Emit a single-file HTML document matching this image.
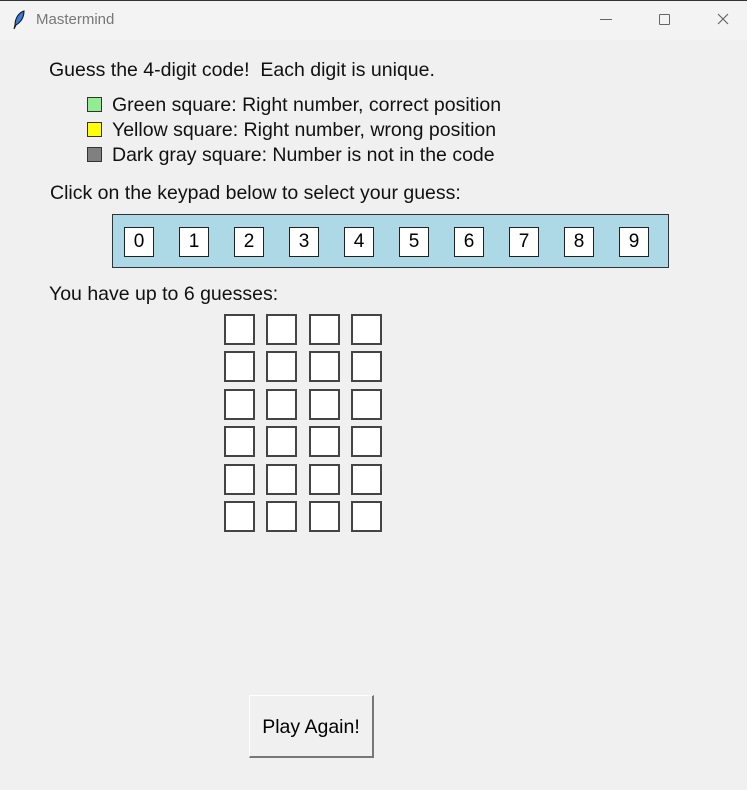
<!DOCTYPE html>
<html><head><style>
body{margin:0;width:747px;height:790px;background:#f0f0f0;font-family:"Liberation Sans",Arial,sans-serif;overflow:hidden;position:relative;color:#000}
.a{position:absolute}
.t{font-size:19.5px;white-space:nowrap;line-height:20px;color:#111}
.sq{position:absolute;width:13px;height:13px;border:1px solid #333}
.k{position:absolute;top:227px;width:28px;height:28px;border:1px solid #222;background:#fff;font-size:19px;text-align:center;line-height:28px}
.g{position:absolute;width:27px;height:27px;border:2px solid #444;background:#fff}
</style></head><body>
<div class="a" style="left:0;top:0;width:747px;height:1px;background:#333"></div>
<div class="a" style="left:0;top:1px;width:747px;height:39px;background:#f3f3f3"></div>
<svg class="a" style="left:12px;top:10px" width="14" height="20" viewBox="0 0 14 20"><path d="M12 1 C6 3 3 9 3 15 L2 19 L4 15 C9 12 12 7 12 1Z" fill="#3a7ad8" stroke="#111" stroke-width="1"/></svg>
<div class="a" style="left:36px;top:11px;font-size:15px;color:#777">Mastermind</div>
<div class="a" style="left:600px;top:19px;width:12px;height:1px;background:#666"></div>
<div class="a" style="left:659px;top:14px;width:9px;height:9px;border:1px solid #666;border-radius:1px"></div>
<svg class="a" style="left:717px;top:13px" width="12" height="12"><path d="M1 1L11 11M11 1L1 11" stroke="#666" stroke-width="1.2"/></svg>

<div class="a t" style="left:49px;top:60px">Guess the 4-digit code!&nbsp; Each digit is unique.</div>
<div class="sq" style="left:87px;top:97px;background:#90ee90"></div>
<div class="a t" style="left:112px;top:95px">Green square: Right number, correct position</div>
<div class="sq" style="left:87px;top:122px;background:#ffff00"></div>
<div class="a t" style="left:112px;top:120px">Yellow square: Right number, wrong position</div>
<div class="sq" style="left:87px;top:147px;background:#808080"></div>
<div class="a t" style="left:112px;top:145px">Dark gray square: Number is not in the code</div>
<div class="a t" style="left:50px;top:183px">Click on the keypad below to select your guess:</div>
<div class="a" style="left:112px;top:214px;width:555px;height:52px;background:#add8e6;border:1px solid #333"></div>
<div class="k" style="left:124px">0</div><div class="k" style="left:179px">1</div><div class="k" style="left:234px">2</div><div class="k" style="left:289px">3</div><div class="k" style="left:344px">4</div><div class="k" style="left:399px">5</div><div class="k" style="left:454px">6</div><div class="k" style="left:509px">7</div><div class="k" style="left:564px">8</div><div class="k" style="left:619px">9</div>
<div class="a t" style="left:49px;top:284px">You have up to 6 guesses:</div>
<div id="grid"></div>
<script>
var h='';var ys=[314,351,389,426,464,501],xs=[224,266,309,351];
ys.forEach(function(y){xs.forEach(function(x){h+='<div class="g" style="left:'+x+'px;top:'+y+'px"></div>';});});
document.getElementById('grid').innerHTML=h;
</script>
<div class="a" style="left:249px;top:695px;width:122px;height:60px;background:#f0f0f0;border-top:1px solid #fff;border-left:1px solid #fff;border-right:2px solid #777;border-bottom:2px solid #777;font-size:19.5px;text-align:center;line-height:62px">Play Again!</div>
</body></html>
